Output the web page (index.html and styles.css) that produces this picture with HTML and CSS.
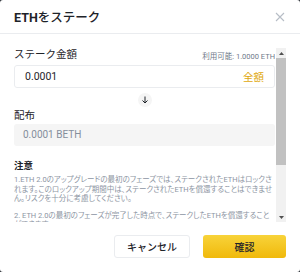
FILE: index.html
```html
<!DOCTYPE html>
<html lang="ja">
<head>
<meta charset="utf-8">
<title>ETHをステーク</title>
<link rel="stylesheet" href="styles.css">
</head>
<body>
<div class="modal">
  <div class="modal-head">
    <div class="modal-title"><b>ETH</b>をステーク</div>
    <svg class="close" width="10" height="10" viewBox="0 0 10 10"><path d="M1 1L9 9M9 1L1 9" stroke="#b7bdc6" stroke-width="1.1" fill="none"/></svg>
  </div>
  <div class="modal-body">
    <div class="scroll">
      <div class="label-row">
        <span class="label">ステーク金額</span>
        <span class="avail">利用可能: 1.0000 ETH</span>
      </div>
      <div class="input">
        <span>0.0001</span>
        <span class="max">全額</span>
      </div>
      <div class="arrow-row">
        <span class="arrow">
          <svg width="8" height="8" viewBox="0 0 8 8"><path d="M4 0.5V7M1.5 4.5L4 7L6.5 4.5" stroke="#1e2329" stroke-width="1" fill="none"/></svg>
        </span>
      </div>
      <div class="label">配布</div>
      <div class="output">0.0001 BETH</div>
      <div class="note-title">注意</div>
      <p class="note">1.ETH 2.0のアップグレードの最初のフェーズでは、ステークされたETHはロックされます。このロックアップ期間中は、ステークされたETHを償還することはできません。リスクを十分に考慮してください。</p>
      <p class="note">2. ETH 2.0の最初のフェーズが完了した時点で、ステークしたETHを償還することができます。</p>
    </div>
    <div class="scrollbar">
      <div class="sb-btn">
        <svg width="5" height="3" viewBox="0 0 5 3"><path d="M0 3L2.5 0L5 3Z" fill="#505050"/></svg>
      </div>
      <div class="sb-thumb"></div>
      <div class="sb-track"></div>
      <div class="sb-btn">
        <svg width="5" height="3" viewBox="0 0 5 3"><path d="M0 0L2.5 3L5 0Z" fill="#505050"/></svg>
      </div>
    </div>
  </div>
  <div class="modal-foot">
    <div class="btn cancel">キャンセル</div>
    <div class="btn confirm">確認</div>
  </div>
</div>
</body>
</html>
```

FILE: styles.css
```css
body {
  margin: 0;
  background-color: #2b2f36;
  font-family: Roboto, "Noto Sans CJK JP", sans-serif;
  color: #1e2329;
}
.modal {
  width: 300px;
  height: 272px;
  background-color: white;
  border-radius: 3px;
  display: flex;
  flex-direction: column;
  overflow: hidden;
}
.modal-head {
  height: 34px;
  box-sizing: border-box;
  padding: 0 15px 0 14px;
  display: flex;
  align-items: center;
  justify-content: space-between;
  border-bottom: 1px solid #eaecef;
}
.modal-title {
  font-size: 12.5px;
  font-weight: 500;
}
.modal-title b { font-weight: 700; }
.modal-body {
  display: flex;
  height: 174px;
  margin-top: 14px;
  padding: 0 14px;
  gap: 1px;
}
.scroll {
  flex: 1;
  overflow: hidden;
}
.label-row {
  display: flex;
  justify-content: space-between;
  align-items: flex-end;
  height: 14px;
}
.label {
  font-size: 10.5px;
  line-height: 14px;
}
.avail {
  font-size: 7.5px;
  color: #707a8a;
  line-height: 10px;
}
.input {
  margin-top: 3px;
  height: 23px;
  box-sizing: border-box;
  border: 1px solid #eaecef;
  border-radius: 3px;
  display: flex;
  align-items: center;
  justify-content: space-between;
  padding: 0 10px 0 10px;
  font-size: 10.5px;
}
.max {
  color: #e0a80d;
}
.arrow-row {
  display: flex;
  justify-content: center;
  padding: 5px 0 2px;
}
.arrow {
  width: 14px;
  height: 14px;
  border-radius: 50%;
  background-color: #f5f5f5;
  display: flex;
  align-items: center;
  justify-content: center;
}
.output {
  margin-top: 1px;
  height: 22px;
  border-radius: 3px;
  background-color: #f5f5f5;
  color: #848e9c;
  font-size: 10px;
  line-height: 22px;
  padding-left: 9px;
}
.note-title {
  margin-top: 14px;
  font-size: 9.5px;
  font-weight: 700;
  line-height: 12px;
}
.note {
  margin: 3px 0 7px;
  font-size: 7.5px;
  line-height: 9.5px;
  color: #8d95a3;
  font-feature-settings: "palt";
}
.scrollbar {
  width: 10px;
  display: flex;
  flex-direction: column;
  background-color: #f1f1f1;
}
.sb-btn {
  height: 10px;
  display: flex;
  align-items: center;
  justify-content: center;
}
.sb-thumb {
  height: 107px;
  background-color: #c1c1c1;
}
.sb-track {
  flex: 1;
}
.modal-foot {
  display: flex;
  justify-content: flex-end;
  gap: 13px;
  padding: 13px 14px 0;
}
.btn {
  height: 23px;
  box-sizing: border-box;
  border-radius: 3px;
  font-size: 10px;
  font-weight: 500;
  display: flex;
  align-items: center;
  justify-content: center;
}
.cancel {
  width: 76px;
  border: 1px solid #eaecef;
}
.confirm {
  width: 83px;
  background-image: linear-gradient(180deg, #f8d33a 0%, #f0b90b 100%);
}
```
